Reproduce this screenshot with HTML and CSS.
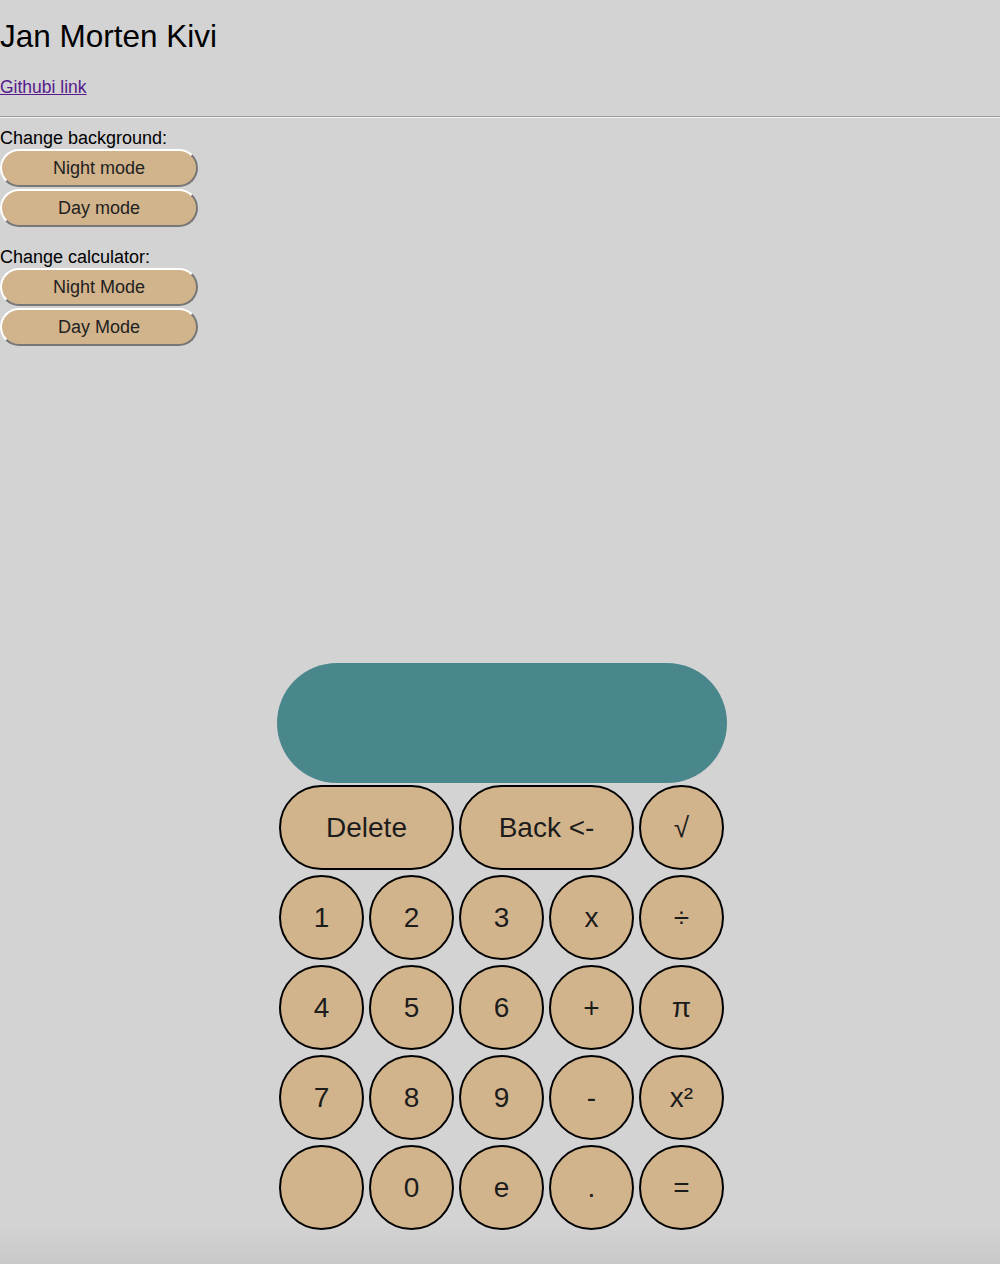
FILE: index.html
```html
<!DOCTYPE html>
<html lang="en">
<head>
<meta charset="utf-8">
<title>Calculator</title>
<link rel="stylesheet" href="styles.css">
</head>
<body>
<h1 class="title">Jan Morten Kivi</h1>
<p class="link-line"><a class="gh-link" href="#">Githubi link</a></p>
<hr class="divider">
<div class="group">
  <div class="group-label">Change background:</div>
  <button class="mode-btn">Night mode</button>
  <button class="mode-btn">Day mode</button>
</div>
<div class="group group-second">
  <div class="group-label">Change calculator:</div>
  <button class="mode-btn">Night Mode</button>
  <button class="mode-btn">Day Mode</button>
</div>

<div class="calculator">
  <div class="display"></div>
  <div class="keys">
    <button class="key key-wide">Delete</button>
    <button class="key key-wide">Back &lt;-</button>
    <button class="key">√</button>
    <button class="key">1</button>
    <button class="key">2</button>
    <button class="key">3</button>
    <button class="key">x</button>
    <button class="key">÷</button>
    <button class="key">4</button>
    <button class="key">5</button>
    <button class="key">6</button>
    <button class="key">+</button>
    <button class="key">π</button>
    <button class="key">7</button>
    <button class="key">8</button>
    <button class="key">9</button>
    <button class="key">-</button>
    <button class="key">x²</button>
    <button class="key"></button>
    <button class="key">0</button>
    <button class="key">e</button>
    <button class="key">.</button>
    <button class="key">=</button>
  </div>
</div>
</body>
</html>
```

FILE: styles.css
```css
html {
  background: #d3d3d3;
}
body {
  margin: 0;
  background: #d3d3d3;
  font-family: "Liberation Sans", Arial, sans-serif;
  color: #000;
  min-height: 1264px;
  background-image: linear-gradient(to bottom, rgba(0,0,0,0) 1225px, rgba(0,0,0,0.05) 1264px);
}
.title {
  font-size: 31.5px;
  font-weight: normal;
  line-height: 37px;
  margin: 18px 0 0;
}
.link-line {
  margin: 22px 0 0;
  font-size: 17.5px;
  line-height: 20px;
}
.gh-link {
  color: #551a8b;
}
.divider {
  margin: 19px 0 0;
  border: 0;
  border-top: 1px solid #9a9a9a;
  border-bottom: 1px solid #f4f4f4;
  height: 0;
}
.group {
  margin-top: 10px;
  display: flex;
  flex-direction: column;
  align-items: flex-start;
}
.group-second {
  margin-top: 20px;
}
.group-label {
  font-size: 18px;
  line-height: 20px;
  margin-bottom: 1px;
}
.mode-btn {
  width: 198px;
  height: 38px;
  border-radius: 19px;
  background: #d2b48c;
  border: 2px solid;
  border-color: #ffffff #777777 #777777 #ffffff;
  font-family: "Liberation Sans", Arial, sans-serif;
  font-size: 18px;
  color: #222;
  padding: 0;
  margin: 0;
}
.mode-btn + .mode-btn {
  margin-top: 2px;
}
.calculator {
  width: 450px;
  margin: 317px 0 0 277px;
  display: flex;
  flex-direction: column;
  gap: 2px;
}
.display {
  height: 120px;
  border-radius: 60px;
  background: #4a878d;
}
.keys {
  margin-left: 2px;
  display: grid;
  grid-template-columns: repeat(5, 85px);
  grid-auto-rows: 85px;
  gap: 5px;
}
.key {
  width: 85px;
  height: 85px;
  border-radius: 50%;
  border: 2px solid #000;
  background: #d2b48c;
  font-family: "Liberation Sans", Arial, sans-serif;
  font-size: 28px;
  color: #1c1c1c;
  padding: 0;
  margin: 0;
}
.key-wide {
  width: 175px;
  grid-column: span 2;
  border-radius: 43px;
}
```
